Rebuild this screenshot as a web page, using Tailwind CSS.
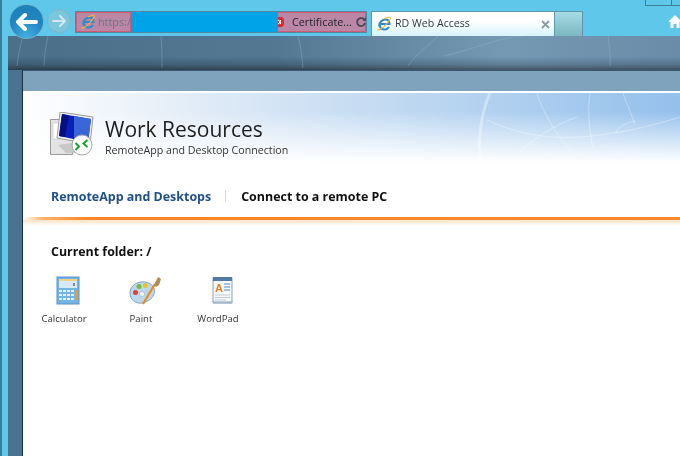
<!DOCTYPE html>
<html lang="en">
<head>
<meta charset="utf-8">
<script src="https://cdn.jsdelivr.net/npm/@tailwindcss/browser@4"></script>
<title>RD Web Access</title>
</head>
<body class="m-0">
<div class="relative flex h-[456px] w-[680px] flex-col overflow-hidden bg-[#5fc8ea] font-['Open_Sans',sans-serif] blur-[0.35px]">
  <!-- browser chrome -->
  <header class="relative z-10 flex h-[36px] shrink-0 items-start border-l-[2px] border-l-[#3d7f9a] pl-[7px]">
    <div class="mt-[4px] flex h-[35px] w-[35px] shrink-0 items-center justify-center rounded-full border border-[#6fb8d2] bg-[radial-gradient(circle_at_50%_95%,#45aee0_0%,#1f86c0_50%,#1f80b6_100%)]">
      <svg width="22" height="18" viewBox="0 0 22 18" fill="none" stroke="#fff" stroke-width="4" stroke-linecap="round" stroke-linejoin="round"><path d="M9 2 2 9l7 7M3 9h17"/></svg>
    </div>
    <div class="ml-[3px] mt-[9px] flex h-[24px] w-[24px] shrink-0 items-center justify-center rounded-full border border-[#7cb6cc] bg-[#7cc6dc]">
      <svg width="14" height="12" viewBox="0 0 14 12" fill="none" stroke="#d4e7ee" stroke-width="2" stroke-linecap="round" stroke-linejoin="round"><path d="M8 1l5 5-5 5M1 6h11"/></svg>
    </div>
    <div class="ml-[4px] mt-[11px] flex h-[22px] w-[292px] shrink-0 border border-[#56869c] bg-[#ba88a6] text-[10.8px] leading-[20px]">
      <div class="flex w-[55px] shrink-0 items-center border border-[#d45a72] pl-[3px] text-[#6f7288]">
        <svg width="16" height="16" viewBox="0 0 16 16" fill="none" class="shrink-0"><path d="M3 10.500C3 6 6.500 3.500 9.500 3.500 12 3.500 13.500 5 13.500 8H4.500M13 11c-1 1.600-2.400 2.500-4.200 2.500-3 0-5-1.600-5-4.500" stroke="#2a8bd0" stroke-width="2"/><path d="M1.500 13.500C3 15 7 12 10.500 8 13 5 15.500 2.500 14 1.500 12.800.8 10 2 8 3" stroke="#f2b632" stroke-width="1.100"/></svg>
        <span class="ml-[2px] whitespace-nowrap">https:/</span>
      </div>
      <div class="flex w-[147px] shrink-0 items-center bg-[#00a2e8] pl-[4px]">
        <span class="h-[10px] w-[1px] bg-[#6f86a4]"></span>
      </div>
      <div class="flex min-w-0 flex-1 items-center border border-[#d45a72] border-l-0 text-[#26222c]">
        <svg width="6" height="10" viewBox="0 0 6 10" class="shrink-0"><path d="M0 0h4l2 2v6L4 10H0z" fill="#d92b34"/><path d="M0 3l3 2-3 2M3 3 1 5l2 2" stroke="#fff" stroke-width="1" fill="none"/></svg>
        <span class="ml-[8px] whitespace-nowrap">Certificate...</span>
        <svg width="12" height="12" viewBox="0 0 12 12" fill="none" class="ml-[3px] shrink-0"><path d="M9.800 4.500A4 4 0 1 0 10 7" stroke="#4a4650" stroke-width="1.800"/><path d="M7.500 4.800h3.500V1z" fill="#4a4650"/></svg>
      </div>
    </div>
    <div class="ml-[4px] mt-[11px] flex h-[25px] w-[184px] shrink-0 items-center border border-[#5e98ad] border-b-0 bg-[linear-gradient(#ffffff,#ffffff_40%,#d5f3fb)] pl-[4px] text-[10.6px] text-[#2f3a44]">
      <svg width="16" height="16" viewBox="0 0 16 16" fill="none" class="shrink-0"><path d="M3 10.500C3 6 6.500 3.500 9.500 3.500 12 3.500 13.500 5 13.500 8H4.500M13 11c-1 1.600-2.400 2.500-4.200 2.500-3 0-5-1.600-5-4.500" stroke="#2a8bd0" stroke-width="2"/><path d="M1.500 13.500C3 15 7 12 10.500 8 13 5 15.500 2.500 14 1.500 12.800.8 10 2 8 3" stroke="#f2b632" stroke-width="1.100"/></svg>
      <span class="ml-[3px] whitespace-nowrap">RD Web Access</span>
      <svg width="9" height="9" viewBox="0 0 9 9" class="ml-auto mr-[4px] shrink-0" stroke="#8b9ca4" stroke-width="1.800"><path d="M1 1l7 7M8 1 1 8"/></svg>
    </div>
    <div class="mt-[11px] h-[25px] w-[28px] shrink-0 border border-[#5e98ad] border-b-0 border-l-0 bg-[linear-gradient(#a6dce6,#7cb6bf)]"></div>
    <div class="ml-[86px] mt-[15px] flex shrink-0 items-start">
      <svg width="12" height="13" viewBox="0 0 12 13" fill="#fff"><path d="M6 0 0 6v1h1.500v6h3V9h3v4h3V7H12V6z"/></svg>
    </div>
    <div class="absolute left-[643px] top-0 flex h-[6px]">
      <div class="h-full w-[27px] border border-t-0 border-[#3f7f96]"></div>
      <div class="h-full w-[27px] border border-l-0 border-t-0 border-[#3f7f96]"></div>
    </div>
  </header>

  <!-- content area -->
  <div class="flex min-h-0 flex-1 border-l-[2px] border-l-[#3d7f9a] pl-[6px]">
    <div class="relative flex min-w-0 flex-1 flex-col bg-[linear-gradient(90deg,#4a7390,#436a87_50%,#4f7896)]">
      <!-- dark desktop band -->
      <div class="relative h-[34px] shrink-0 overflow-hidden bg-[linear-gradient(180deg,#00000000_0%,#00000000_60%,#00000030_85%,#00000070_100%),linear-gradient(90deg,#4b6f89_0%,#557892_40%,#7598b3_74%,#6a8ca8_100%)]">
        <svg class="absolute inset-0" width="672" height="34" viewBox="0 0 672 34" fill="none" stroke="#9fbdd0" stroke-opacity="0.35">
          <path d="M15 0c-3 10-5 20-6 30M40 0c-2 10-4 20-4 30M153 0c1 10 1 20 1 32M290 0c3 12 4 20 5 32M430 0c-10 10-24 20-30 30M436 20c40-10 60-20 80-20M600 0c1 10 3 20 2 30"/>
        </svg>
      </div>
      <div class="ml-[14px] flex min-h-0 flex-1 flex-col border-l border-t border-l-[#172f44] border-t-[#3b5870] bg-white">
        <div class="h-[22px] shrink-0 border-b-[2px] border-b-white bg-[#7fa2bd]"></div>
        <!-- banner -->
        <div class="relative flex h-[73px] shrink-0 overflow-hidden bg-[linear-gradient(180deg,#ffffff00_0%,#ffffff00_25%,#ffffff_95%),linear-gradient(90deg,#ffffff_0%,#dde9f6_30%,#b8d4f0_65%,#94c0ec_100%)]">
          <svg class="absolute left-[442px] top-0" width="215" height="73" viewBox="0 0 215 73" fill="none" stroke="#ffffff" stroke-opacity="0.35">
            <path stroke-width="3" d="M25 0C15 22 13 50 15 72"/>
            <path d="M22 27c30 14 60 19 93 17 40-3 75-12 100-20M72 0c5 20 25 50 45 72M50 64c20-20 40-32 62-40M125 0c-3 20 0 40 3 55M158 0c3 10 10 24 12 32M150 40c5-8 12-10 20-12"/>
          </svg>
          <svg class="relative ml-[27px] mt-[19px] shrink-0" width="46" height="44" viewBox="0 0 46 44" fill="none">
            <path d="M0.500 7.500h22v35h-22z" fill="#e4e4e4" stroke="#9a9a9a"/>
            <path d="M3 11h8v16H3z" fill="#fff" stroke="#bbb" stroke-width="0.500"/>
            <path d="M10 0 43 5 40 32 7 26z" fill="#f2f2f2" stroke="#9a9a9a"/>
            <path d="M12 2 41 7 38 30 9 24z" fill="#0b1fbc"/>
            <path d="M24 4 41 7 38 30 24 27z" fill="#3a66d8"/>
            <path d="M12 2 19 3.500 15 25 9 24z" fill="#05107e"/>
            <path d="M8 33l8 8h10l-4-10z" fill="#c8c8c8"/>
            <circle cx="32" cy="33" r="10" fill="#fff" stroke="#a8a8a8"/>
            <path d="M25.500 30l3.500 3.500-3.500 3.500M37.500 27 33.500 30.500l4 3.500" stroke="#18a12d" stroke-width="2" transform="translate(0 1)"/>
          </svg>
          <div class="relative ml-[9px] mt-[23px] text-[#111]">
            <div class="text-[21px] leading-[26px] text-[#1d1d1d]">Work Resources</div>
            <div class="mt-[2px] text-[10.65px] leading-[13px] text-[#333]">RemoteApp and Desktop Connection</div>
          </div>
        </div>
        <!-- nav -->
        <nav class="flex h-[51px] shrink-0 items-start pl-[28px] pt-[21px] text-[12.45px] font-bold leading-[19px]">
          <span class="text-[#1f5088]">RemoteApp and Desktops</span>
          <span class="ml-[14px] mt-[3px] h-[12px] w-[1px] bg-[#d5d8da]"></span>
          <span class="ml-[15px] text-[#111]">Connect to a remote PC</span>
        </nav>
        <div class="h-[3px] shrink-0 bg-[linear-gradient(90deg,#ffffff_0%,#fbb367_3%,#f8862a_10%,#fb8a28_100%)]"></div>
        <div class="h-[6px] shrink-0 bg-[linear-gradient(180deg,#fce2c5,#ffffff)]"></div>
        <main class="pl-[28px] pt-[17px]">
          <h1 class="text-[12.4px] font-bold leading-[18px] text-[#111]">Current folder: /</h1>
          <ul class="mt-[15px] flex text-[9.6px] leading-[14px] text-[#333]">
            <li class="flex w-[26px] flex-col items-center">
              <svg class="ml-[7px] shrink-0" width="26" height="30" viewBox="0 0 26 30" fill="none">
                <rect x="2" y="1" width="22" height="27" fill="#74b4e4" stroke="#5a94c8"/>
                <rect x="4" y="3" width="18" height="9" fill="#d8e8f4"/>
                <rect x="4" y="3" width="18" height="2" fill="#f2cf86"/>
                <path d="M18 7h2v3h-2z" fill="#6b8fb0"/>
                <path d="M4 14h3v2H4zM8 14h3v2H8zM12 14h3v2h-3zM16 14h3v2h-3zM4 18h3v2H4zM8 18h3v2H8zM12 18h3v2h-3zM16 18h3v2h-3zM4 22h3v2H4zM8 22h3v2H8zM12 22h3v2h-3zM16 22h3v2h-3z" fill="#e6f0f8"/>
                <path d="M20 14h2v10h-2z" fill="#ee9a2c"/>
              </svg>
              <span class="mt-[6px] whitespace-nowrap">Calculator</span>
            </li>
            <li class="ml-[52px] flex w-[24px] flex-col items-center">
              <svg class="ml-[7px] shrink-0" width="34" height="30" viewBox="0 0 34 30" fill="none">
                <path d="M2 17C2 9 10 5 17 6c7 1 11 6 9 12-2 6-8 8-12 9-6 1-12-3-12-10z" fill="#bcd8ea" stroke="#7ea8c4"/>
                <circle cx="7.500" cy="16.500" r="2.500" fill="#e23f36"/>
                <circle cx="11" cy="10.500" r="2.500" fill="#76bb3e"/>
                <circle cx="17.500" cy="9.500" r="2.500" fill="#efc132"/>
                <circle cx="14" cy="18" r="2.600" fill="#eef5fa" stroke="#7ea8c4" stroke-width="0.500"/>
                <path d="M15 28 27 8" stroke="#ee8a1e" stroke-width="2.200"/>
                <path d="M26 9 30 1l3 2-2 6-3 2z" fill="#b08a58"/>
              </svg>
              <span class="mt-[6px] whitespace-nowrap">Paint</span>
            </li>
            <li class="ml-[48px] flex w-[34px] flex-col items-center">
              <svg class="ml-[8px] shrink-0" width="24" height="30" viewBox="0 0 24 30" fill="none">
                <path d="M2 25h21l-1 3H3z" fill="#b7c6d4"/>
                <rect x="3" y="2" width="19" height="24" fill="#f5f8fb" stroke="#8aa4bd"/>
                <rect x="3" y="1" width="19" height="4" fill="#4e7ca6"/>
                <text x="5" y="16" font-family="'Liberation Sans',sans-serif" font-weight="700" font-size="11" fill="#ee7d1e">A</text>
                <path d="M14 8h6M14 11h6M14 14h6" stroke="#5a8cc0" stroke-width="1.200"/>
                <path d="M5 19h15M5 21.500h15M5 24h11" stroke="#c2ccd6"/>
              </svg>
              <span class="mt-[6px] whitespace-nowrap">WordPad</span>
            </li>
          </ul>
        </main>
      </div>
    </div>
  </div>
</div>
</body>
</html>
